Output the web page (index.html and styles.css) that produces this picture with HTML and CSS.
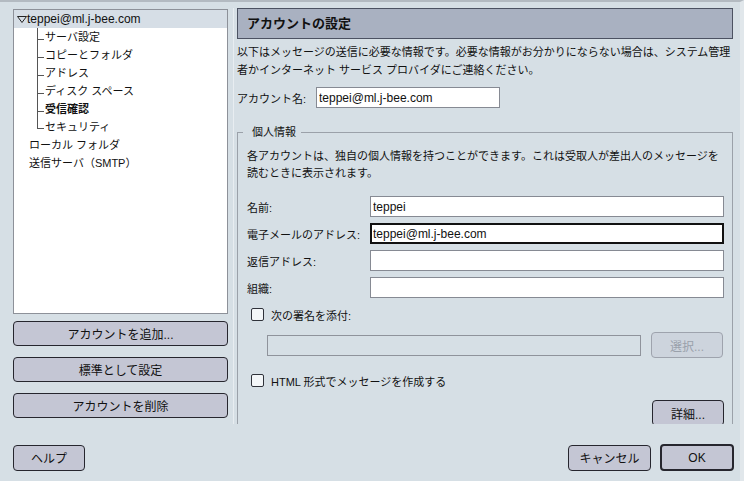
FILE: index.html
```html
<!DOCTYPE html>
<html lang="ja">
<head>
    <meta charset="UTF-8">
    <title>アカウントの設定</title>
    <link rel="stylesheet" href="styles.css">
</head>
<body>
    <div class="window">
        <div class="main">
            <!-- Daftar akun -->
            <div class="sidebar">
                <div class="tree">
                    <div class="row selected">
                        <svg class="twisty" width="10" height="7" viewBox="0 0 10 7"><path d="M0.5 0.5 H9.5 L5 6.5 Z" fill="none" stroke="#222" stroke-width="1"/></svg>
                        <span class="latin">teppei@ml.j-bee.com</span>
                    </div>
                    <div class="children">
                        <div class="row child">サーバ設定</div>
                        <div class="row child">コピーとフォルダ</div>
                        <div class="row child">アドレス</div>
                        <div class="row child">ディスク スペース</div>
                        <div class="row child strong">受信確認</div>
                        <div class="row child last">セキュリティ</div>
                    </div>
                    <div class="row top">ローカル フォルダ</div>
                    <div class="row top">送信サーバ（SMTP）</div>
                </div>
                <button class="btn side-btn">アカウントを追加...</button>
                <button class="btn side-btn">標準として設定</button>
                <button class="btn side-btn">アカウントを削除</button>
            </div>

            <div class="splitter"></div>

            <!-- Panel pengaturan -->
            <div class="panel">
                <div class="panel-title">アカウントの設定</div>
                <p class="intro">以下はメッセージの送信に必要な情報です。必要な情報がお分かりにならない場合は、システム管理<br>者かインターネット サービス プロバイダにご連絡ください。</p>
                <div class="account-row">
                    <label>アカウント名:</label>
                    <input type="text" class="text-input account" value="teppei@ml.j-bee.com">
                </div>

                <fieldset class="identity">
                    <legend>個人情報</legend>
                    <p class="note">各アカウントは、独自の個人情報を持つことができます。これは受取人が差出人のメッセージを<br>読むときに表示されます。</p>
                    <div class="fields">
                        <label>名前:</label>
                        <input type="text" class="text-input" value="teppei">
                        <label>電子メールのアドレス:</label>
                        <input type="text" class="text-input focused" value="teppei@ml.j-bee.com">
                        <label>返信アドレス:</label>
                        <input type="text" class="text-input" value="">
                        <label>組織:</label>
                        <input type="text" class="text-input" value="">
                    </div>
                    <div class="check-row">
                        <input type="checkbox" class="check">
                        <label>次の署名を添付:</label>
                    </div>
                    <div class="sig-row">
                        <input type="text" class="text-input sig" disabled>
                        <button class="btn small" disabled>選択...</button>
                    </div>
                    <div class="check-row html">
                        <input type="checkbox" class="check">
                        <label>HTML 形式でメッセージを作成する</label>
                    </div>
                    <div class="advanced">
                        <button class="btn small">詳細...</button>
                    </div>
                </fieldset>
            </div>
        </div>

        <div class="footer">
            <button class="btn help">ヘルプ</button>
            <button class="btn cancel">キャンセル</button>
            <button class="btn ok">OK</button>
        </div>
    </div>
</body>
</html>
```

FILE: styles.css
```css
/* Dasar */
* {
    box-sizing: border-box;
}

body {
    margin: 0;
    background: #d6dfe5;
    font-family: "Liberation Sans", "Noto Sans CJK JP", sans-serif;
    font-size: 11px;
    color: #111;
}

.latin {
    font-size: 12px;
}

.window {
    width: 744px;
    height: 481px;
    border-top: 2px solid #b3bac1;
    border-right: 4px solid #e1e7eb;
}

.main {
    display: flex;
    height: 422px;
    padding: 6px 0 0 13px;
}

/* Sidebar + tree */
.sidebar {
    width: 215px;
    display: flex;
    flex-direction: column;
    padding-top: 1px;
}

.tree {
    height: 305px;
    background: #fff;
    border: 1px solid #8d9199;
}

.row {
    height: 18px;
    line-height: 18px;
    white-space: nowrap;
}

.selected {
    display: flex;
    align-items: center;
    padding-left: 3px;
    background: #d6dee6;
}

.twisty {
    display: block;
    margin-top: 1px;
}

.children {
    margin-left: 23px;
}

.child {
    padding-left: 8px;
    background:
        linear-gradient(#555, #555) 0 0 / 1px 100% no-repeat,
        linear-gradient(#555, #555) 0 11px / 7px 1px no-repeat;
}

.child.last {
    background:
        linear-gradient(#555, #555) 0 0 / 1px 11px no-repeat,
        linear-gradient(#555, #555) 0 10px / 7px 1px no-repeat;
}

.strong {
    font-weight: bold;
}

.top {
    padding-left: 15px;
}

/* Tombol */
.btn {
    font-family: inherit;
    font-size: 11px;
    color: #111;
    background: #c4c6d4;
    border: 1px solid #26262e;
    border-radius: 4px;
    padding: 0;
}

.btn:disabled {
    background: #cdd4dd;
    border-color: #9ea3ad;
    color: #9aa1ab;
}

.side-btn {
    height: 25px;
    margin-top: 11px;
    font-size: 12px;
}

.side-btn:first-of-type {
    margin-top: 7px;
}

.splitter {
    width: 1px;
    margin: 0 3px 0 5px;
    background: #e8edf1;
}

/* Panel kanan */
.panel {
    width: 496px;
    overflow: hidden;
}

.panel-title {
    height: 31px;
    line-height: 29px;
    padding-left: 9px;
    background: #a9b1c1;
    border: 1px solid #4c5262;
    font-size: 13px;
    font-weight: bold;
}

.intro {
    margin: 4px 0 0;
    line-height: 18px;
    white-space: nowrap;
}

.account-row {
    display: flex;
    align-items: center;
    margin-top: 8px;
}

.account-row label {
    width: 79px;
}

.text-input {
    height: 21px;
    padding: 0 2px;
    border: 1px solid #868a93;
    background: #fff;
    font-family: "Liberation Sans", "Noto Sans CJK JP", sans-serif;
    font-size: 12px;
    color: #111;
    outline: none;
}

.text-input.account {
    width: 184px;
}

.text-input.focused {
    border: 2px solid #111;
    padding: 0 1px;
}

.identity {
    margin: 15px 0 0;
    padding: 7px 8px 0 9px;
    border: 1px solid #9ba1a9;
}

.identity legend {
    margin-left: -4px;
    padding: 0 5px 0 9px;
    line-height: 18px;
}

.note {
    margin: 0;
    line-height: 17px;
    white-space: nowrap;
}

.fields {
    display: grid;
    grid-template-columns: 123px 1fr;
    row-gap: 6px;
    align-items: center;
    margin-top: 14px;
}

.check-row {
    display: flex;
    align-items: center;
    height: 17px;
    margin-top: 8px;
    padding-left: 4px;
}

.check-row.html {
    margin-top: 14px;
}

.check {
    appearance: none;
    width: 13px;
    height: 13px;
    margin: 0 7px 0 0;
    background: #f3f6f8;
    border: 1px solid #2f323a;
    border-radius: 2px;
}

.check-row label {
    font-size: 11px;
}

.sig-row {
    display: flex;
    align-items: center;
    gap: 10px;
    margin-top: 9px;
    padding-left: 20px;
}

.text-input.sig {
    width: 374px;
    background: #d6dfe5;
    border-color: #8f939b;
}

.btn.small {
    width: 72px;
    height: 26px;
    font-size: 12px;
}

.advanced {
    display: flex;
    justify-content: flex-end;
    margin-top: 11px;
}

/* Footer */
.footer {
    display: flex;
    align-items: center;
    margin-top: 20px;
    padding: 0 6px 0 13px;
}

.help {
    width: 72px;
    height: 26px;
    font-size: 12px;
}

.cancel {
    width: 83px;
    height: 26px;
    margin-left: auto;
    font-size: 12px;
}

.ok {
    width: 74px;
    height: 27px;
    margin-left: 9px;
    border-width: 2px;
    font-size: 12px;
}
```
